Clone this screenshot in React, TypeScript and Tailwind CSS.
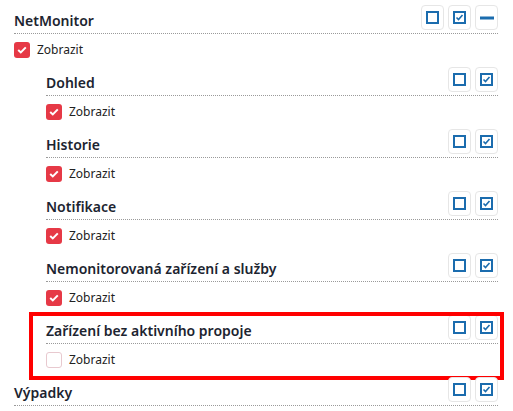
import React from 'react';

const font = { fontFamily: '"Noto Sans", "Open Sans", sans-serif' };

function SquareIcon() {
  return (
    <svg width="13" height="13" viewBox="0 0 13 13">
      <rect x="1" y="1" width="11" height="11" fill="none" stroke="#1b6cae" strokeWidth="2" />
    </svg>
  );
}

function CheckSquareIcon() {
  return (
    <svg width="13" height="13" viewBox="0 0 13 13">
      <rect x="1" y="1" width="11" height="11" fill="none" stroke="#1b6cae" strokeWidth="2" />
      <path d="M3.5 6.5 L5.5 8.5 L9.5 4" fill="none" stroke="#1b6cae" strokeWidth="1.6" />
    </svg>
  );
}

function MinusIcon() {
  return (
    <svg width="14" height="4" viewBox="0 0 14 4">
      <rect x="0" y="0.5" width="14" height="3" fill="#1b6cae" />
    </svg>
  );
}

function ToolButton({ children }: { children: React.ReactNode }) {
  return (
    <button className="w-[23px] h-[25px] flex items-center justify-center bg-white border border-[#e6e6e6] rounded-[4px]">
      {children}
    </button>
  );
}

function Checkbox({ checked }: { checked: boolean }) {
  return checked ? (
    <span className="w-[16px] h-[16px] rounded-[3px] bg-[#e63946] flex items-center justify-center">
      <svg width="10" height="8" viewBox="0 0 10 8">
        <path d="M1.2 4 L3.8 6.4 L8.8 1.4" fill="none" stroke="white" strokeWidth="2" />
      </svg>
    </span>
  ) : (
    <span className="w-[16px] h-[16px] rounded-[3px] bg-white border border-[#e8c9cf]" />
  );
}

function Section({
  title,
  checked = true,
  minus = false,
  showCheckbox = true,
  highlight = false,
}: {
  title: string;
  checked?: boolean;
  minus?: boolean;
  showCheckbox?: boolean;
  highlight?: boolean;
}) {
  return (
    <div className={`relative ${showCheckbox ? 'pb-[9px]' : ''}`}>
      <div className="flex items-end justify-between border-b border-dotted border-[#9a9a9a] pb-[3px]">
        <span className="text-[14px] leading-none font-semibold text-[#1c2430] mb-[2px]">{title}</span>
        <div className="flex gap-[4px]">
          <ToolButton>
            <SquareIcon />
          </ToolButton>
          <ToolButton>
            <CheckSquareIcon />
          </ToolButton>
          {minus && (
            <ToolButton>
              <MinusIcon />
            </ToolButton>
          )}
        </div>
      </div>
      {showCheckbox && (
        <div className="flex items-center gap-[7px] mt-[8px] h-[16px]">
          <Checkbox checked={checked} />
          <span className="text-[12px] leading-none text-[#222]">Zobrazit</span>
        </div>
      )}
      {highlight && (
        <div className="absolute left-[-17px] right-[-6px] top-[-3px] bottom-[-3px] border-4 border-[#ff0000] pointer-events-none" />
      )}
    </div>
  );
}

export default function App() {
  return (
    <div className="w-[513px] h-[411px] bg-white overflow-hidden pt-[5px] pl-[14px] pr-[15px]" style={font}>
      <Section title="NetMonitor" minus />
      <div className="pl-[32px]">
        <Section title="Dohled" />
        <Section title="Historie" />
        <Section title="Notifikace" />
        <Section title="Nemonitorovaná zařízení a služby" />
        <Section title="Zařízení bez aktivního propoje" checked={false} highlight />
      </div>
      <Section title="Výpadky" showCheckbox={false} />
    </div>
  );
}
